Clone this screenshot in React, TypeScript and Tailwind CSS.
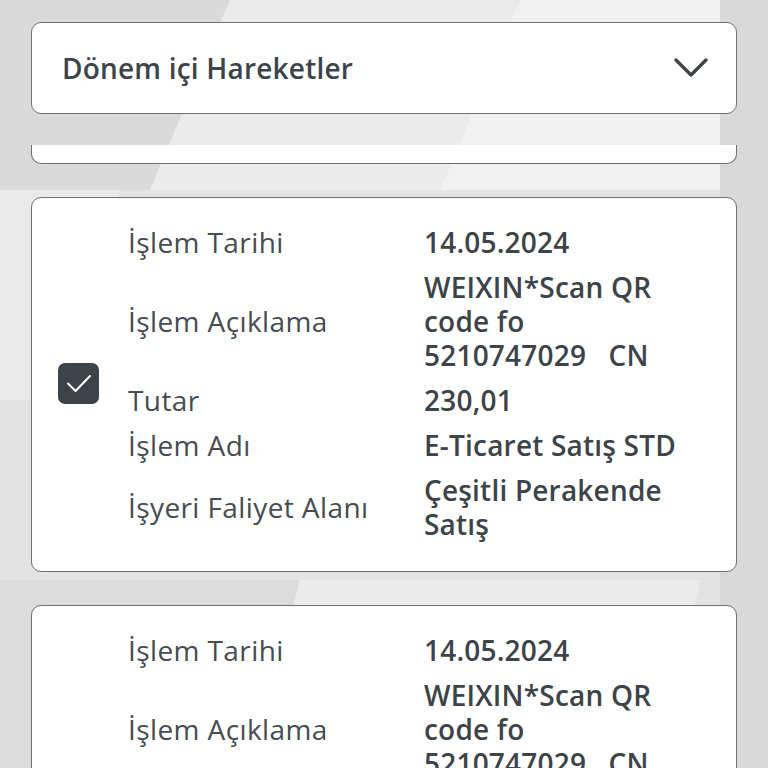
import { Fragment } from "react"

type Row = { label: string; value: string[] }

const rows: Row[] = [
  { label: "İşlem Tarihi", value: ["14.05.2024"] },
  { label: "İşlem Açıklama", value: ["WEIXIN*Scan QR", "code fo", "5210747029   CN"] },
  { label: "Tutar", value: ["230,01"] },
  { label: "İşlem Adı", value: ["E-Ticaret Satış STD"] },
  { label: "İşyeri Faliyet Alanı", value: ["Çeşitli Perakende", "Satış"] },
]

function Check() {
  return (
    <div className="h-[41px] w-[41px] shrink-0 rounded-[7px] bg-[#3d4449]">
      <svg viewBox="0 0 41 41" className="h-[41px] w-[41px]" fill="none" stroke="white" strokeWidth="2" strokeLinecap="round" strokeLinejoin="round">
        <path d="M10 20.5l7.5 7.5L32 13" />
      </svg>
    </div>
  )
}

function TxCard({ checked }: { checked: boolean }) {
  return (
    <div className="flex items-center rounded-[10px] border border-[#707070] bg-white pb-[30px] pl-[26px] pt-[27px]">
      <div className="w-[41px] shrink-0">{checked && <Check />}</div>
      <div className="ml-[29px] grid grid-cols-[296px_1fr] gap-y-[11px] text-[28px] leading-[34px] tracking-[0.4px] text-[#3d4449]">
        {rows.map((r) => (
          <Fragment key={r.label}>
            <div className="self-center font-normal text-[#464c50]">{r.label}</div>
            <div className="whitespace-pre font-semibold tracking-[0.2px]">
              {r.value.map((v) => (
                <div key={v}>{v}</div>
              ))}
            </div>
          </Fragment>
        ))}
      </div>
    </div>
  )
}

export default function App() {
  return (
    <div className="relative h-[768px] w-[768px] overflow-hidden bg-[#e3e3e4]" style={{ fontFamily: '"Open Sans", "Liberation Sans", sans-serif' }}>
      <svg className="absolute inset-0 h-full w-full" viewBox="0 0 768 768" preserveAspectRatio="none">
        <polygon points="0,0 230,0 150,190 0,190" fill="#dadadb" />
        <polygon points="230,0 520,0 440,190 150,190" fill="#ebebec" />
        <polygon points="520,0 720,0 720,190 440,190" fill="#f1f1f2" />
        <polygon points="720,0 768,0 768,768 720,768" fill="#d9d9da" />
        <polygon points="0,190 120,190 40,400 0,400" fill="#e9e9ea" />
        <polygon points="0,580 300,580 250,768 0,768" fill="#dcdcdd" />
        <polygon points="300,580 700,580 660,768 250,768" fill="#ececed" />
      </svg>
      <div className="relative flex flex-col px-[31px] pt-[22px]">
        <div className="flex h-[92px] items-center justify-between rounded-[10px] border border-[#707070] bg-white pl-[30px] pr-[28px]">
          <span className="text-[28px] font-semibold tracking-[0.2px] text-[#3d4449]">Dönem içi Hareketler</span>
          <svg viewBox="0 0 34 20" className="h-[20px] w-[34px]" fill="none" stroke="#3d4449" strokeWidth="3.2" strokeLinecap="round" strokeLinejoin="round">
            <path d="M2 2l15 15L32 2" />
          </svg>
        </div>
        <div className="mt-[31px] flex flex-col gap-[33px]">
          <div className="h-[19px] rounded-b-[10px] border border-t-0 border-[#707070] bg-white" />
          <TxCard checked />
          <TxCard checked={false} />
        </div>
      </div>
    </div>
  )
}
